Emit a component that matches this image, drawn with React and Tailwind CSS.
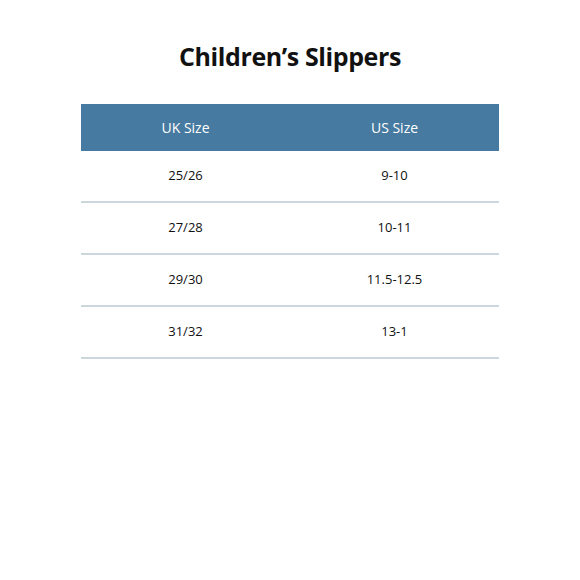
const rows = [
  ["25/26", "9-10"],
  ["27/28", "10-11"],
  ["29/30", "11.5-12.5"],
  ["31/32", "13-1"],
];

export default function App() {
  return (
    <div className="w-[580px] h-[580px] bg-white font-['Open_Sans',sans-serif] text-[#111]">
      <h1 className="pt-[39px] text-center text-[25px] leading-[35px] font-bold tracking-[-0.4px]">
        Children’s Slippers
      </h1>

      <div className="mx-[81px] mt-[30px]">
        {/* Header */}
        <div className="grid grid-cols-2 h-[47px] items-center bg-[#467aa0] text-white text-[14px]">
          <div className="text-center">UK Size</div>
          <div className="text-center">US Size</div>
        </div>

        {rows.map(([uk, us]) => (
          <div
            key={uk}
            className="grid grid-cols-2 h-[52px] items-center border-b-2 border-[#cad8de] text-[13px]"
          >
            <div className="text-center">{uk}</div>
            <div className="text-center">{us}</div>
          </div>
        ))}
      </div>
    </div>
  );
}
